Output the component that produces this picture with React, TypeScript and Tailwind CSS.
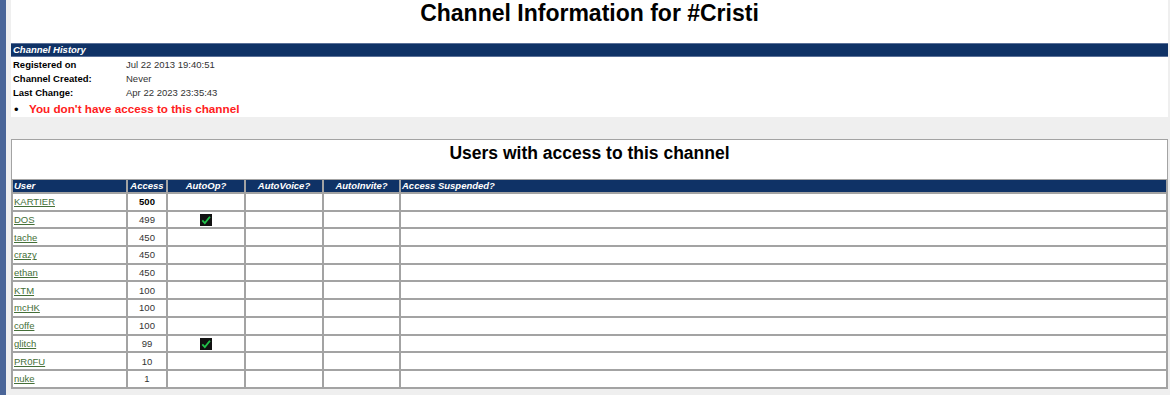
import React from 'react';

interface AccessRow {
  user: string;
  level: number;
  autoOp?: boolean;
}

const users: AccessRow[] = [
  { user: 'KARTIER', level: 500 },
  { user: 'DOS', level: 499, autoOp: true },
  { user: 'tache', level: 450 },
  { user: 'crazy', level: 450 },
  { user: 'ethan', level: 450 },
  { user: 'KTM', level: 100 },
  { user: 'mcHK', level: 100 },
  { user: 'coffe', level: 100 },
  { user: 'glitch', level: 99, autoOp: true },
  { user: 'PR0FU', level: 10 },
  { user: 'nuke', level: 1 },
];

const history = [
  { label: 'Registered on', value: 'Jul 22 2013 19:40:51' },
  { label: 'Channel Created:', value: 'Never' },
  { label: 'Last Change:', value: 'Apr 22 2023 23:35:43' },
];

// little black box with a green tick, the old "yes" image
const Tick = () => (
  <svg width="12" height="12" viewBox="0 0 13 13" className="inline-block align-middle">
    <rect x="0" y="0" width="13" height="13" fill="#111" />
    <path d="M2.5 7 L5.2 9.8 L10.8 3" fill="none" stroke="#22c24a" strokeWidth="2" />
  </svg>
);

const cell = 'border border-[#a3a3a3] h-[17.7px] px-[1px] py-0 leading-[13px]';
const head = 'border border-[#a3a3a3] h-[14px] px-[1px] py-0 leading-[12px] text-white italic font-bold';

export default function App() {
  return (
    <div className="flex w-[1170px] h-[395px] overflow-hidden bg-[#efefef] text-[9.5px] text-[#333] [font-family:'Liberation_Sans',Arial,sans-serif]">
      <div className="w-[6px] shrink-0 bg-[#4a6598]" />
      <div className="flex-1 pl-[5px] pr-[2px]">
        {/* header + history */}
        <div className="bg-white h-[117px]">
          <h1 className="text-center text-black font-bold text-[23px] leading-[27px] h-[43px]">
            Channel Information for #Cristi
          </h1>
          <div className="bg-[#0f3266] text-white italic font-bold h-[14px] leading-[12px] px-[2px] border-y border-[#5a7098]">
            Channel History
          </div>
          <div className="pt-[1px]">
            {history.map((h) => (
              <div key={h.label} className="flex h-[14px] leading-[14px] px-[2px]">
                <span className="w-[113px] font-bold text-black">{h.label}</span>
                <span>{h.value}</span>
              </div>
            ))}
          </div>
          <div className="flex items-center h-[18px] pl-[3px]">
            <span className="w-[15px] text-black text-[13px] leading-[13px]">•</span>
            <span className="text-[#ff2020] font-bold text-[11.7px]">You don't have access to this channel</span>
          </div>
        </div>

        {/* access list */}
        <div className="mt-[22px] bg-white border border-[#a3a3a3]">
          <h2 className="text-center text-black font-bold text-[17.5px] h-[39px] leading-[26px]">
            Users with access to this channel
          </h2>
          <table className="w-full border-separate border-spacing-0 table-fixed">
            <colgroup>
              <col className="w-[115px]" />
              <col className="w-[40px]" />
              <col className="w-[78px]" />
              <col className="w-[78px]" />
              <col className="w-[77px]" />
              <col />
            </colgroup>
            <thead>
              <tr className="bg-[#0f3266]">
                <th className={`${head} text-left`}>User</th>
                <th className={`${head} text-center`}>Access</th>
                <th className={`${head} text-center`}>AutoOp?</th>
                <th className={`${head} text-center`}>AutoVoice?</th>
                <th className={`${head} text-center`}>AutoInvite?</th>
                <th className={`${head} text-left`}>Access Suspended?</th>
              </tr>
            </thead>
            <tbody>
              {users.map((u) => (
                <tr key={u.user}>
                  <td className={cell}>
                    <a href="#" className="text-[#446f38] underline">{u.user}</a>
                  </td>
                  <td className={`${cell} text-center ${u.level === 500 ? 'font-bold text-black' : ''}`}>{u.level}</td>
                  <td className={`${cell} text-center`}>{u.autoOp && <Tick />}</td>
                  <td className={cell}></td>
                  <td className={cell}></td>
                  <td className={cell}></td>
                </tr>
              ))}
            </tbody>
          </table>
        </div>
      </div>
    </div>
  );
}
